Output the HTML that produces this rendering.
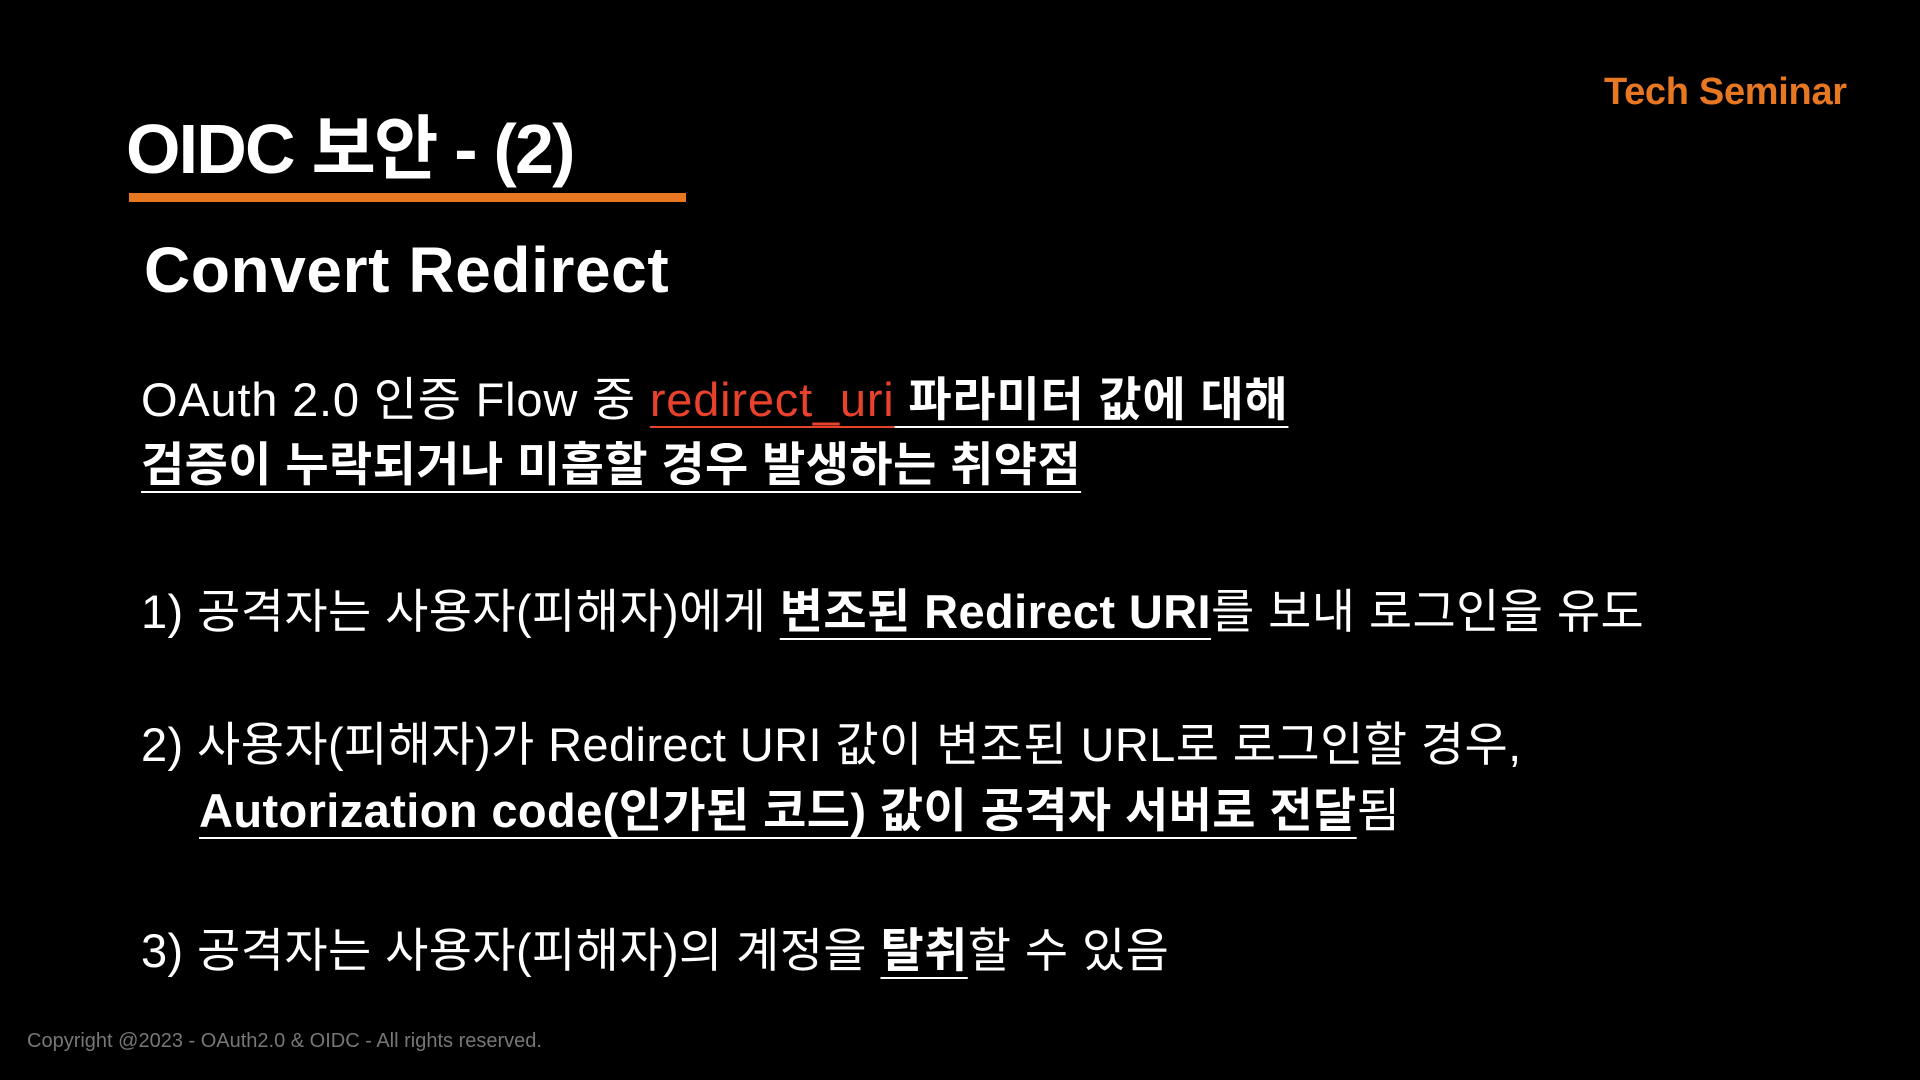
<!DOCTYPE html>
<html><head><meta charset="utf-8"><style>
body{margin:0;width:1920px;height:1080px;background:#000;overflow:hidden;font-family:"Liberation Sans","Noto Sans CJK KR",sans-serif;color:#fff}
.a{position:absolute;white-space:nowrap}
.t{font-size:47px;line-height:60px;letter-spacing:0.4px}
.u{text-decoration:underline;text-decoration-thickness:2px;text-underline-offset:10px}
b{font-weight:700}
.r{color:#e8412c}
</style></head><body>
<div class="a" style="left:1604px;top:70px;font-size:38px;font-weight:700;color:#e87722;line-height:44px;letter-spacing:-0.3px">Tech Seminar</div>
<div class="a" style="left:126px;top:107px;font-size:70px;font-weight:700;line-height:84px;letter-spacing:-1.8px">OIDC 보안 - (2)</div>
<div style="position:absolute;left:129px;top:193px;width:557px;height:9px;background:#e87722"></div>
<div class="a" style="left:144px;top:232px;font-size:64px;font-weight:700;line-height:76px;letter-spacing:0.6px">Convert Redirect</div>
<div class="a t" style="left:141px;top:370px;letter-spacing:0.8px">OAuth 2.0 인증 Flow 중 <span class="u r">redirect_uri</span><b class="u"> 파라미터 값에 대해</b></div>
<div class="a t" style="left:141px;top:435px"><b class="u">검증이 누락되거나 미흡할 경우 발생하는 취약점</b></div>
<div class="a t" style="left:141px;top:582px">1) 공격자는 사용자(피해자)에게 <b class="u">변조된 Redirect URI</b>를 보내 로그인을 유도</div>
<div class="a t" style="left:141px;top:715px">2) 사용자(피해자)가 Redirect URI 값이 변조된 URL로 로그인할 경우,</div>
<div class="a t" style="left:199px;top:781px"><b class="u">Autorization code(인가된 코드) 값이 공격자 서버로 전달</b>됨</div>
<div class="a t" style="left:141px;top:921px">3) 공격자는 사용자(피해자)의 계정을 <b class="u">탈취</b>할 수 있음</div>
<div class="a" style="left:27px;top:1029px;font-size:20px;line-height:24px;color:#777">Copyright @2023 - OAuth2.0 &amp; OIDC - All rights reserved.</div>
</body></html>
